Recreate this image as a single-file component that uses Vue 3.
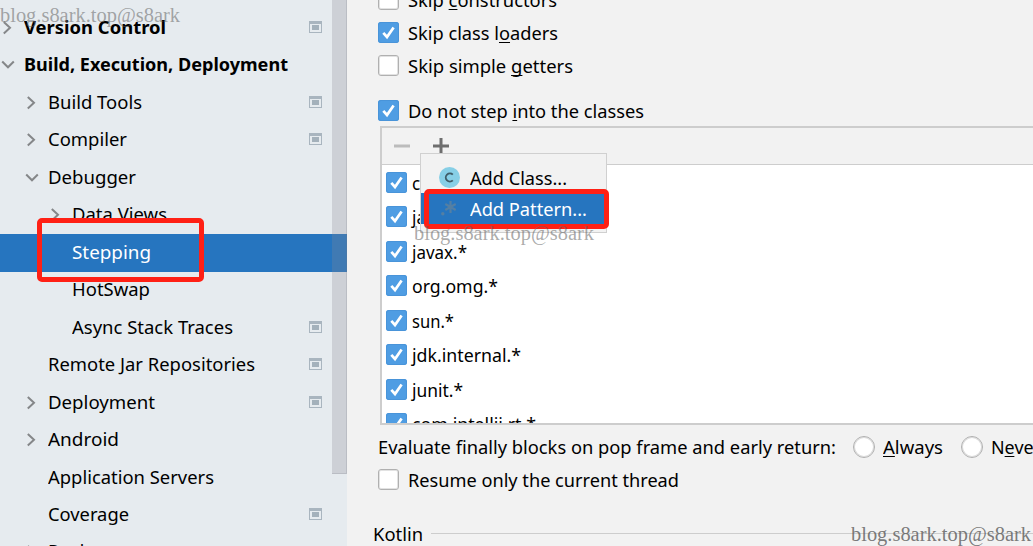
<script setup>
const tree = [
  { label: 'Plugins', level: 0, bold: true, width: 66 },
  { label: 'Version Control', level: 0, bold: true, arrow: 'right', width: 142, scope: true },
  { label: 'Build, Execution, Deployment', level: 0, bold: true, arrow: 'down', width: 264 },
  { label: 'Build Tools', level: 1, arrow: 'right', width: 94, scope: true },
  { label: 'Compiler', level: 1, arrow: 'right', width: 79, scope: true },
  { label: 'Debugger', level: 1, arrow: 'down', width: 88 },
  { label: 'Data Views', level: 2, arrow: 'right', width: 95 },
  { label: 'Stepping', level: 2, selected: true, width: 79 },
  { label: 'HotSwap', level: 2, width: 78 },
  { label: 'Async Stack Traces', level: 2, width: 161, scope: true },
  { label: 'Remote Jar Repositories', level: 1, width: 207, scope: true },
  { label: 'Deployment', level: 1, arrow: 'right', width: 107, scope: true },
  { label: 'Android', level: 1, arrow: 'right', width: 71 },
  { label: 'Application Servers', level: 1, width: 166 },
  { label: 'Coverage', level: 1, width: 81, scope: true },
  { label: 'Docker', level: 1, arrow: 'right', width: 58 },
]
const options = [
  { a: 'Skip ', m: 'c', b: 'onstructors', width: 149 },
  { a: 'Skip class l', m: 'o', b: 'aders', on: true, width: 150 },
  { a: 'Skip simple ', m: 'g', b: 'etters', width: 165 },
  { a: 'Do not step ', m: 'i', b: 'nto the classes', on: true, width: 236, gap: true },
]
const patterns = [
  { label: 'com.sun.*', width: 82 },
  { label: 'java.*', width: 46 },
  { label: 'javax.*', width: 55 },
  { label: 'org.omg.*', width: 86 },
  { label: 'sun.*', width: 42 },
  { label: 'jdk.internal.*', width: 109 },
  { label: 'junit.*', width: 51 },
  { label: 'com.intellij.rt.*', width: 124 },
]
// Condenses a label horizontally so that it occupies the given width.
const vFit = {
  mounted(el, { value }) {
    el.style.transform = `scaleX(${value / el.getBoundingClientRect().width})`
  },
}
</script>

<template>
  <div class="window">
    <aside class="sidebar">
      <div class="tree">
        <div v-for="n in tree" :key="n.label" class="row" :class="['l' + n.level, { bold: n.bold, selected: n.selected }]">
          <span class="arrow">
            <svg v-if="n.arrow === 'right'" width="14" height="14" viewBox="0 0 14 14"><path d="M2.8 .9 9 6.7 2.8 12.5" /></svg>
            <svg v-if="n.arrow === 'down'" width="14" height="14" viewBox="0 0 14 14"><path d="M1.2 3.5 7 9.3 12.8 3.5" /></svg>
          </span>
          <span class="label"><span v-fit="n.width" class="t">{{ n.label }}</span></span>
          <svg v-if="n.scope" class="scope" width="13" height="12" viewBox="0 0 13 12">
            <rect width="13" height="12" fill="#a9b5bf" /><rect x="1" y="3" width="11" height="8" fill="#e6ebef" /><rect x="3" y="4" width="7" height="5" fill="#a4b1bb" />
          </svg>
        </div>
      </div>
      <div class="scrollbar"></div>
    </aside>

    <main class="content">
      <div class="options">
        <div v-for="o in options" :key="o.b" class="option" :class="{ gap: o.gap }">
          <span class="box" :class="{ on: o.on }"><svg v-if="o.on" width="21" height="21" viewBox="0 0 21 21"><path d="M5.3 10.8 9 15 15.6 5.4" /></svg></span>
          <span v-fit="o.width" class="t">{{ o.a }}<u>{{ o.m }}</u>{{ o.b }}</span>
        </div>
      </div>

      <section class="panel">
        <div class="toolbar">
          <svg width="80" height="36" viewBox="0 0 80 36"><path d="M12 18h16" stroke="#bcbcbc" stroke-width="3" /><path d="M51 18h16M59 10v16" stroke="#6e6e6e" stroke-width="3" /></svg>
        </div>
        <div class="list">
          <div v-for="p in patterns" :key="p.label" class="item">
            <span class="box on"><svg width="21" height="21" viewBox="0 0 21 21"><path d="M5.3 10.8 9 15 15.6 5.4" /></svg></span>
            <span v-fit="p.width" class="t">{{ p.label }}</span>
          </div>
        </div>
      </section>

      <div class="evaluate">
        <span class="question"><span v-fit="458" class="t">Evaluate finally blocks on pop frame and early return:</span></span>
        <span class="radio"></span>
        <span class="answer"><span v-fit="60" class="t"><u>A</u>lways</span></span>
        <span class="radio"></span>
        <span class="answer"><span v-fit="50" class="t">N<u>e</u>ver</span></span>
      </div>
      <div class="option resume">
        <span class="box"></span>
        <span v-fit="271" class="t">Resume only the current thread</span>
      </div>
      <div class="group"><span class="heading"><span v-fit="50" class="t">Kotlin</span></span><i></i></div>
    </main>

    <div class="popup">
      <div class="action">
        <svg width="21" height="21" viewBox="0 0 21 21"><circle cx="10.5" cy="10.5" r="10.5" fill="#87cfe6" /><path d="M13.8 7.6A4.1 4.1 0 1 0 13.8 13.4" fill="none" stroke="#3f5d68" stroke-width="1.9" /></svg>
        <span v-fit="97" class="t">Add Class...</span>
      </div>
      <div class="action active">
        <svg width="21" height="21" viewBox="0 0 21 21"><circle cx="3.8" cy="15.8" r="1.7" fill="#547fa3" /><path d="M11.5 3v12M6.3 6l10.4 6M16.7 6 6.3 12" stroke="#547fa3" stroke-width="2.2" /></svg>
        <span v-fit="117" class="t">Add Pattern...</span>
      </div>
    </div>

    <div class="mark mark-step"></div>
    <div class="mark mark-pattern"></div>
    <div class="stamp s1"><span v-fit="180" class="t">blog.s8ark.top@s8ark</span></div>
    <div class="stamp s2"><span v-fit="180" class="t">blog.s8ark.top@s8ark</span></div>
    <div class="stamp s3"><span v-fit="180" class="t">blog.s8ark.top@s8ark</span></div>
  </div>
</template>

<style>
body { overflow: hidden; }
</style>

<style scoped>
* { box-sizing: border-box; }
.window { position: relative; display: flex; width: 1033px; height: 546px; overflow: hidden; background: #f2f2f2; color: #000; font: 18.5px/24px "Noto Sans", "Open Sans", sans-serif; }
.t { display: inline-block; flex: none; white-space: pre; transform-origin: 0 50%; }
u { text-decoration-thickness: 1px; text-underline-offset: 2px; text-decoration-skip-ink: none; }

.sidebar { position: relative; width: 347px; flex: none; overflow: hidden; background: #e6ebef; }
.tree { margin-top: -28.5px; }
.row { display: flex; align-items: center; height: 37.5px; }
.row:last-child { margin-top: -1px; }
.l1 { padding-left: 24px; }
.l2 { padding-left: 48px; }
.arrow { width: 24px; height: 14px; padding-left: 1px; flex: none; }
.arrow svg { display: block; }
.arrow path { fill: none; stroke: #858789; stroke-width: 2; }
.label { flex: 1; height: 26px; }
.bold { font-weight: 700; }
.selected { background: #2675bf; color: #fff; }
.scope { flex: none; margin: 0 25px 2px 0; }
.scrollbar { position: absolute; right: 0; top: 0; width: 15px; height: 474px; background: rgba(136, 136, 148, .27); border: solid rgba(110, 115, 125, .2); border-width: 0 1px 1px 0; }

.content { width: 686px; flex: none; }
.options { margin-top: -11px; }
.option { display: flex; align-items: center; gap: 10px; height: 21px; margin: 0 0 12px 30px; }
.option.gap { margin-top: 24px; margin-bottom: 5px; }
.box { width: 21px; height: 21px; flex: none; border: 1px solid #b0b0b0; border-radius: 3px; background: #fff; box-shadow: inset 0 0 0 1px #e2e2e2; }
.option .t { margin-top: 1px; }
.option .box { position: relative; left: 0.5px; }
.box.on { border: 0; background: #4f9de3; box-shadow: inset 0 0 0 1px #4994d9; }
.box svg { display: block; }
.box path { fill: none; stroke: #fff; stroke-width: 2.7; }

.panel { height: 299px; margin-left: 33px; border: 2px solid #cdcdcd; border-right: 0; display: flex; flex-direction: column; }
.toolbar { height: 37px; flex: none; border-bottom: 1px solid #cdcdcd; }
.toolbar svg { display: block; }
.list { flex: 1; overflow: hidden; padding-top: 0.3px; background: #fff; }
.item { display: flex; align-items: center; gap: 5px; height: 34.45px; padding-left: 4px; }
.item .t { margin-top: 1px; }

.evaluate { display: flex; align-items: center; height: 24px; margin: 10px 0 10px 31px; }
.question { width: 475px; flex: none; }
.radio { width: 22px; height: 22px; flex: none; border: 1px solid #b0b0b0; border-radius: 50%; background: #fff; box-shadow: inset 0 0 0 1px #dcdcdc; }
.answer { width: 86px; flex: none; padding-left: 8px; }
.resume { margin-bottom: 32px; }
.group { display: flex; align-items: center; height: 24px; margin-left: 26px; }
.heading { width: 58px; flex: none; }
.group i { flex: 1; height: 1px; margin-bottom: 1px; background: #cdcdcd; }

.popup { position: absolute; left: 420px; top: 153px; width: 187px; height: 80px; padding-top: 8px; background: #f2f2f2; border: 1px solid #d0d0d0; }
.action { display: flex; align-items: center; gap: 10px; height: 31px; padding-left: 18px; }
.active { background: #2675bf; color: #fff; }
.mark { position: absolute; border: 5px solid #ff2015; border-radius: 5px; }
.mark-step { left: 37px; top: 218px; width: 167px; height: 64px; }
.mark-pattern { left: 424px; top: 189px; width: 185px; height: 40px; }
.stamp { position: absolute; width: 181px; height: 26px; font: 20px/26px "Liberation Serif", serif; color: rgba(100, 100, 100, .55); }
.s1 { left: 0; top: 2px; }
.s2 { left: 414px; top: 220px; }
.s3 { left: 851px; top: 521px; color: rgba(90, 90, 90, .8); }
</style>
